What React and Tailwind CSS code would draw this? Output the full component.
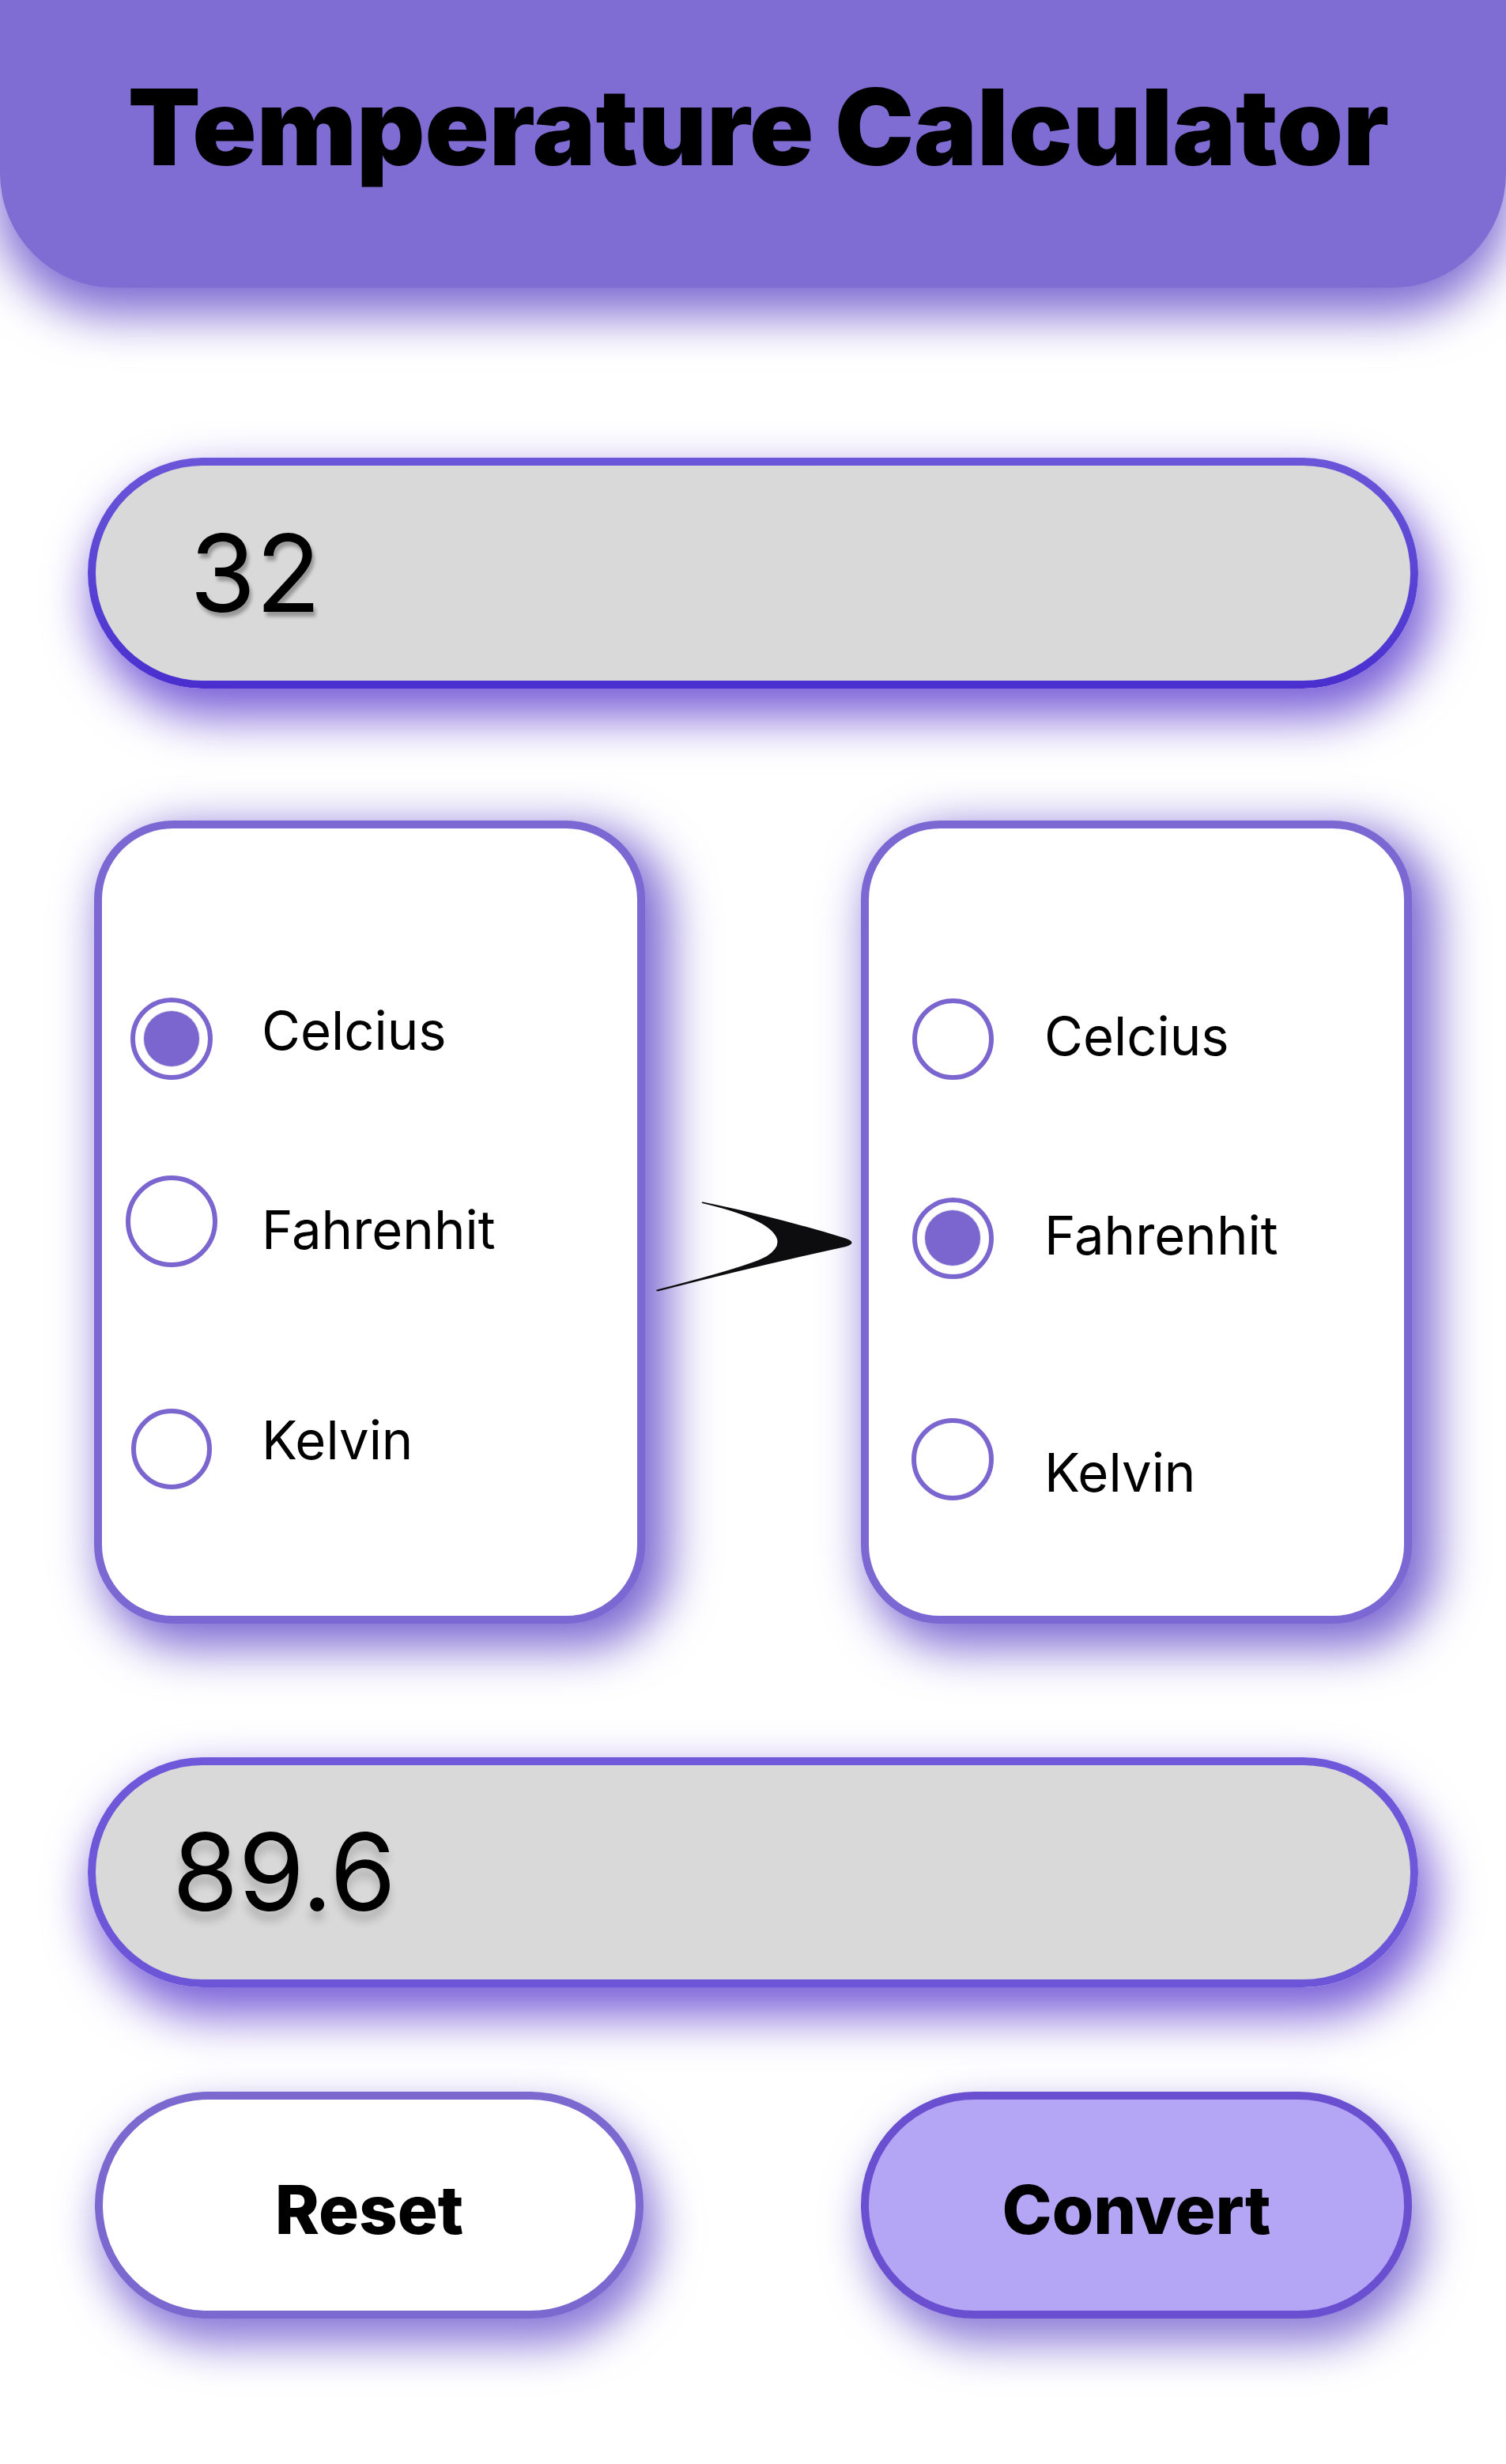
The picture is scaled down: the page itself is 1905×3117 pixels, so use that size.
import React from "react";

function Radio({ size, selected }) {
  return (
    <div className="w-[116px] h-[116px] flex items-center justify-center shrink-0">
      <div
        className={
          "rounded-full border-[6px] border-[#7b66d0] bg-white flex items-center justify-center " +
          (size === 116 ? "w-[116px] h-[116px]" : size === 102 ? "w-[102px] h-[102px]" : size === 103 ? "w-[103px] h-[103px]" : "w-[104px] h-[104px]")
        }
      >
        {selected && <div className="w-[70px] h-[70px] rounded-full bg-[#7b66d0] ring-1 ring-[#e4e2ea]" />}
      </div>
    </div>
  );
}

function Arrow() {
  return (
    <svg width="256" height="118" viewBox="0 0 256 118" className="block">
      <path
        d="M59 1.5 Q150 20 238 47 Q256 53 240 58 Q130 82 2 114.5 Q-1 114 1 112.5 Q120 82 140 70 Q158 58 152 46 Q140 22 58 3 Q57 1.5 59 1.5 Z"
        fill="#0d0d0f"
      />
    </svg>
  );
}

export default function App() {
  return (
    <div className="min-h-[3117px] bg-white font-['Inter','Noto_Sans',sans-serif] text-black">
      <header className="h-[364px] rounded-b-[145px] bg-[#806dd3] shadow-[0_30px_60px_5px_#806dd3] flex justify-center pt-[93px]">
        <h1 className="text-[134px] leading-none font-black ml-[14px]">Temperature Calculator</h1>
      </header>

      <div className="px-[111px] pt-[215px]">
        <div className="h-[292px] rounded-full p-[10px] bg-gradient-to-b from-[#6b56d9] to-[#4a2ecf] shadow-[12px_30px_60px_6px_#7a60d8]">
          <div className="h-full rounded-full bg-[#d9d9d9] flex items-center pl-[119px]">
            <span className="text-[135px] leading-none [text-shadow:3px_6px_4px_rgba(0,0,0,0.3)]">32</span>
          </div>
        </div>
      </div>

      <div className="flex px-[119px] pt-[167px]">
        <div className="w-[697px] h-[1016px] rounded-[100px] border-[10px] border-[#7c68d2] bg-white shadow-[20px_20px_60px_10px_#7c68d2] flex flex-col text-[67px] leading-none">
          <div className="flex items-center h-[116px] mt-[208px] ml-[30px]">
            <Radio size={104} selected />
            <span className="ml-[56px] mb-[22px]">Celcius</span>
          </div>
          <div className="flex items-center h-[116px] mt-[115px] ml-[30px]">
            <Radio size={116} />
            <span className="ml-[56px] mt-[20px]">Fahrenhit</span>
          </div>
          <div className="flex items-center h-[116px] mt-[172px] ml-[30px]">
            <Radio size={102} />
            <span className="ml-[56px] mb-[24px]">Kelvin</span>
          </div>
        </div>

        <div className="flex-1 pt-[481px] pl-[14px] relative z-10">
          <Arrow />
        </div>

        <div className="w-[697px] h-[1016px] rounded-[100px] border-[10px] border-[#7c68d2] bg-white shadow-[20px_20px_60px_10px_#7c68d2] flex flex-col text-[67px] leading-none">
          <div className="flex items-center h-[116px] mt-[208px] ml-[48px]">
            <Radio size={103} />
            <span className="ml-[58px] mb-[8px]">Celcius</span>
          </div>
          <div className="flex items-center h-[116px] mt-[136px] ml-[48px]">
            <Radio size={103} selected />
            <span className="ml-[58px] mb-[8px]">Fahrenhit</span>
          </div>
          <div className="flex items-center h-[116px] mt-[164px] ml-[48px]">
            <Radio size={104} />
            <span className="ml-[58px] mt-[32px]">Kelvin</span>
          </div>
        </div>
      </div>

      <div className="px-[111px] pt-[169px]">
        <div className="h-[291px] rounded-full p-[10px] bg-gradient-to-b from-[#7058db] to-[#6d55d8] shadow-[12px_30px_60px_6px_#7a60d8]">
          <div className="h-full rounded-full bg-[#d9d9d9] flex items-center pl-[97px]">
            <span className="text-[135px] leading-none [text-shadow:0_12px_12px_rgba(0,0,0,0.18)]">89.6</span>
          </div>
        </div>
      </div>

      <div className="flex justify-between px-[119px] pt-[132px]">
        <button className="ml-[1px] w-[694px] h-[287px] rounded-full border-[10px] border-[#7c69d0] bg-white shadow-[12px_28px_55px_4px_#8a78d8] text-[85px] font-extrabold leading-none pt-[12px]">
          Reset
        </button>
        <button className="w-[697px] h-[287px] rounded-full border-[10px] border-[#6a50d0] bg-[#b5a5f5] shadow-[12px_28px_55px_4px_#8e7ed8] text-[85px] font-extrabold leading-none pt-[12px]">
          Convert
        </button>
      </div>
    </div>
  );
}
